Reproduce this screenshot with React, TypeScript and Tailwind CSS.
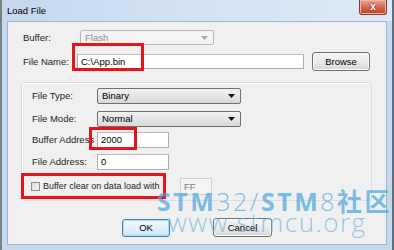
import { ReactNode } from "react";

const FONT = "font-['Liberation_Sans',Arial,sans-serif]";

const Select = ({
  value,
  width,
  disabled,
}: {
  value: string;
  width: string;
  disabled?: boolean;
}) => {
  return (
    <div
      className={`${width} h-full flex items-center justify-between rounded-[2px] border px-[4px] ${
        disabled
          ? "border-[#b5b9bc] bg-[#f4f4f4] text-[#8d8d8d]"
          : "border-[#707070] bg-gradient-to-b from-[#f2f2f2] to-[#d9d9d9] text-black"
      }`}
    >
      <span>{value}</span>
      <svg width="7" height="4" viewBox="0 0 7 4" className="mr-[1px]">
        <path d="M0 0h7L3.5 4z" fill={disabled ? "#a8a8a8" : "#111"} />
      </svg>
    </div>
  );
};

const Input = ({ value, width }: { value: string; width: string }) => {
  return (
    <div
      className={`${width} h-full flex items-center border border-[#abadb3] border-t-[#b9bcc2] bg-white pl-[3px] text-black`}
    >
      {value}
    </div>
  );
};

const Button = ({
  children,
  width,
  height,
  isDefault,
}: {
  children: ReactNode;
  width: string;
  height: string;
  isDefault?: boolean;
}) => {
  return (
    <div
      className={`${width} ${height} flex items-center justify-center rounded-[3px] border text-black ${
        isDefault
          ? "border-[#3c7fb1] bg-gradient-to-b from-[#eef7fc] via-[#e2f1fa] to-[#c9e4f4] shadow-[inset_0_0_0_1px_#b4def5]"
          : "border-[#707070] bg-gradient-to-b from-[#f3f3f3] via-[#ebebeb] to-[#d6d6d6] shadow-[inset_0_0_0_1px_#fcfcfc]"
      }`}
    >
      {children}
    </div>
  );
};

const Row = ({
  label,
  labelWidth,
  children,
  className,
}: {
  label: string;
  labelWidth: string;
  children: ReactNode;
  className: string;
}) => {
  return (
    <div className={`flex items-center ${className}`}>
      <div className={`${labelWidth} shrink-0 text-[#1e1e1e]`}>{label}</div>
      {children}
    </div>
  );
};

const App = () => {
  return (
    <div
      className={`${FONT} relative w-[394px] h-[250px] overflow-hidden bg-[#c4d8ee] text-[9.5px] leading-none`}
    >
      {/* window frame */}
      <div className="flex h-full flex-col border-l-2 border-[#7b7f86] border-r-2 border-r-[#5f6f80]">
        {/* title bar */}
        <div className="flex h-[21px] shrink-0 items-start bg-gradient-to-r from-[#c3d7ee] via-[#d3e3f4] to-[#dce9f7]">
          <span className="mt-[6px] ml-[5px] text-[9.5px] text-black">Load File</span>
          <div className="ml-auto mr-[5px] flex h-[15px] w-[28px] items-center justify-center rounded-b-[3px] border border-t-0 border-[#8d3527] bg-gradient-to-b from-[#e9a898] via-[#d46a55] to-[#c23a22] shadow-[inset_0_0_0_1px_#f0b7a9]">
            <span className="text-[10px] font-bold text-white [text-shadow:0_0_2px_#6b1c10]">x</span>
          </div>
        </div>

        {/* content panel */}
        <div className="mx-[5px] mb-[5px] flex flex-1 flex-col border border-[#9fb3c9] bg-[#f0f0f0]">
          <Row label="Buffer:" labelWidth="w-[57px]" className="mt-[8px] h-[15px] pl-[15px]">
            <Select value="Flash" width="w-[134px]" disabled />
          </Row>

          <Row label="File Name:" labelWidth="w-[54px]" className="mt-[7px] h-[19px] pl-[15px]">
            <div className="h-[15px]">
              <Input value="C:\App.bin" width="w-[227px]" />
            </div>
            <div className="ml-[8px]">
              <Button width="w-[58px]" height="h-[19px]">
                Browse
              </Button>
            </div>
          </Row>

          {/* options group */}
          <div className="mt-[11px] ml-[13px] flex h-[119px] w-[351px] flex-col rounded-[3px] border border-[#d5dfe5] pt-[5px] pl-[10px] shadow-[inset_1px_1px_0_#fff]">
            <Row label="File Type:" labelWidth="w-[65px]" className="h-[16px]">
              <Select value="Binary" width="w-[144px]" />
            </Row>
            <Row label="File Mode:" labelWidth="w-[65px]" className="mt-[7px] h-[16px]">
              <Select value="Normal" width="w-[144px]" />
            </Row>
            <Row label="Buffer Address" labelWidth="w-[65px]" className="mt-[5px] h-[16px]">
              <Input value="2000" width="w-[72px]" />
            </Row>
            <Row label="File Address:" labelWidth="w-[65px]" className="mt-[6px] h-[16px]">
              <Input value="0" width="w-[72px]" />
            </Row>
            <div className="mt-[8px] flex h-[17px] items-center">
              <div className="-ml-[1px] h-[9px] w-[9px] border border-[#8e8f8f] bg-gradient-to-br from-[#dcdcdc] to-[#f7f7f7]" />
              <div className="ml-[3px] w-[137px] text-[9px] text-[#1e1e1e]">
                Buffer clear on data load with
              </div>
              <div className="h-full">
                <div className="flex h-full w-[32px] items-center border border-[#cfd1d4] bg-[#f4f4f4] pl-[3px] text-[#7a7a7a]">
                  FF
                </div>
              </div>
            </div>
          </div>

          {/* dialog buttons */}
          <div className="mt-[17px] flex items-start">
            <div className="ml-[114px] mt-[1px]">
              <Button width="w-[48px]" height="h-[18px]" isDefault>
                OK
              </Button>
            </div>
            <div className="ml-[43px]">
              <Button width="w-[59px]" height="h-[19px]">
                Cancel
              </Button>
            </div>
          </div>
        </div>
      </div>

      {/* red annotation boxes */}
      <div className="absolute left-[72px] top-[43px] h-[28px] w-[72px] border-[3px] border-[#e8131b]" />
      <div className="absolute left-[89px] top-[127px] h-[23px] w-[48px] border-[3px] border-[#e8131b]" />
      <div className="absolute left-[21px] top-[173px] h-[26px] w-[145px] border-[3px] border-[#e8131b]" />

      {/* watermark */}
      <div className="pointer-events-none absolute left-[157px] top-[188px] font-['Open_Sans',sans-serif] text-[25px] leading-none tracking-[2.5px] text-[#45a3dc]/70 whitespace-nowrap">
        <span className="font-bold">STM</span>
        <span className="font-light">32/</span>
        <span className="font-bold">STM</span>
        <span className="font-light">8</span>
        <span className="font-bold font-['Noto_Sans_CJK_SC',sans-serif]">社区</span>
      </div>
      <div className="pointer-events-none absolute left-[168px] top-[209px] font-['Open_Sans',sans-serif] text-[26px] font-light leading-none tracking-[1.5px] text-[#52a9dd]/60 whitespace-nowrap">
        www.stmcu.org
      </div>
    </div>
  );
};

export default App;
